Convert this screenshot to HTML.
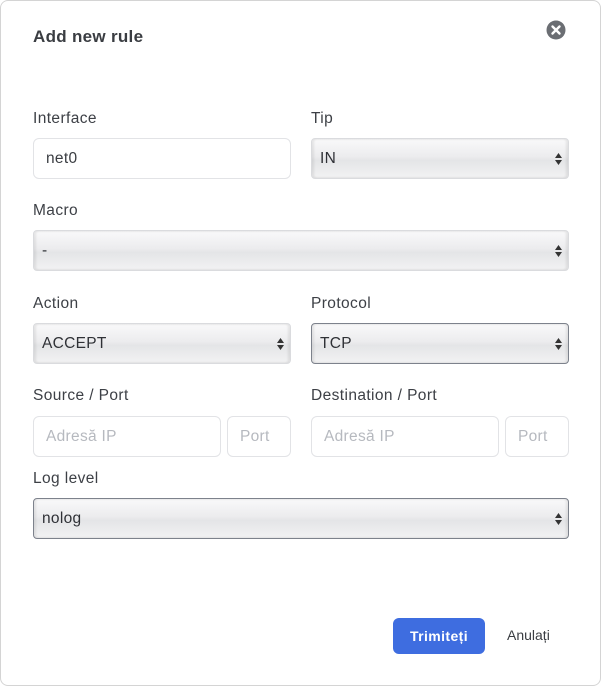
<!DOCTYPE html>
<html><head><style>
*{box-sizing:border-box;margin:0;padding:0}
body{width:602px;height:686px;background:#fff;font-family:"Liberation Sans",sans-serif;position:relative;overflow:hidden}
.card{position:absolute;left:0;top:0;width:601px;height:686px;border:1px solid #d4d4d4;border-radius:8px;background:#fff}
.abs{position:absolute}
h1{position:absolute;left:33px;top:27px;font-size:17px;font-weight:bold;color:#3a3d42;letter-spacing:0.3px}
.lbl{position:absolute;font-size:15.5px;color:#3d4046;letter-spacing:0.4px}
.inp{position:absolute;height:41px;border:1px solid #e2e3e6;border-radius:6px;background:#fff;font-size:15.5px;color:#3a3d42;padding:11px 12px;letter-spacing:0.3px}
.ph{color:#b6b9bf;}
.sel{position:absolute;height:41px;border:1px solid #dadbde;border-radius:4px;font-size:15.5px;color:#2f3136;padding:11px 8px;letter-spacing:0.3px;
background:linear-gradient(#f9f9fa,#ececee 45%,#e4e5e7 55%,#f2f2f3);box-shadow:inset 2px 0 2px rgba(0,0,0,.08),inset -2px 0 2px rgba(0,0,0,.08)}
.dark{border-color:#7d828c}
.arr{position:absolute;right:6px;top:13px;width:7px;height:14px}
.btn{position:absolute;left:393px;top:618px;width:92px;height:36px;background:#3e6de0;border-radius:6px;color:#fff;font-weight:bold;font-size:14px;letter-spacing:0.4px;text-align:center;line-height:36px}
</style></head><body>
<div class="card"></div>
<h1>Add new rule</h1>
<svg class="abs" style="left:546px;top:20px" width="20" height="20" viewBox="0 0 20 20"><circle cx="10" cy="10" r="9.5" fill="#6b6e73"/><path d="M6.5 6.5L13.5 13.5M13.5 6.5L6.5 13.5" stroke="#fff" stroke-width="2.4" stroke-linecap="round"/></svg>

<div class="lbl" style="left:33px;top:110px">Interface</div>
<div class="lbl" style="left:311px;top:110px">Tip</div>
<div class="inp" style="left:33px;top:138px;width:258px">net0</div>
<div class="sel" style="left:311px;top:138px;width:258px">IN<svg class="arr" viewBox="0 0 7 14"><path d="M0 6L3.5 1L7 6ZM0 8L3.5 13L7 8Z" fill="#333"/></svg></div>

<div class="lbl" style="left:33px;top:202px">Macro</div>
<div class="sel" style="left:33px;top:230px;width:536px">-<svg class="arr" viewBox="0 0 7 14"><path d="M0 6L3.5 1L7 6ZM0 8L3.5 13L7 8Z" fill="#333"/></svg></div>

<div class="lbl" style="left:33px;top:295px">Action</div>
<div class="lbl" style="left:311px;top:295px">Protocol</div>
<div class="sel" style="left:33px;top:323px;width:258px">ACCEPT<svg class="arr" viewBox="0 0 7 14"><path d="M0 6L3.5 1L7 6ZM0 8L3.5 13L7 8Z" fill="#333"/></svg></div>
<div class="sel dark" style="left:311px;top:323px;width:258px">TCP<svg class="arr" viewBox="0 0 7 14"><path d="M0 6L3.5 1L7 6ZM0 8L3.5 13L7 8Z" fill="#333"/></svg></div>

<div class="lbl" style="left:33px;top:387px">Source / Port</div>
<div class="lbl" style="left:311px;top:387px">Destination / Port</div>
<div class="inp ph" style="left:33px;top:416px;width:188px">Adresă IP</div>
<div class="inp ph" style="left:227px;top:416px;width:64px;padding-left:12px">Port</div>
<div class="inp ph" style="left:311px;top:416px;width:188px">Adresă IP</div>
<div class="inp ph" style="left:505px;top:416px;width:64px;padding-left:12px">Port</div>

<div class="lbl" style="left:33px;top:470px">Log level</div>
<div class="sel dark" style="left:33px;top:498px;width:536px">nolog<svg class="arr" viewBox="0 0 7 14"><path d="M0 6L3.5 1L7 6ZM0 8L3.5 13L7 8Z" fill="#333"/></svg></div>

<div class="btn">Trimiteți</div>
<div class="abs" style="left:507px;top:627px;font-size:14px;color:#3a3d42">Anulați</div>
</body></html>
